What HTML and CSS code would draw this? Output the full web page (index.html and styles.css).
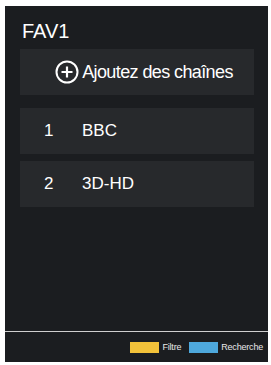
FILE: index.html
```html
<!DOCTYPE html>
<html lang="fr">
<head>
    <meta charset="UTF-8">
    <meta name="viewport" content="width=device-width, initial-scale=1.0">
    <title>FAV1</title>
    <link rel="stylesheet" href="styles.css">
</head>
<body>
    <div class="panel">
        <div class="panel-main">
            <h1 class="title">FAV1</h1>

            <!-- Add channels button -->
            <div class="add-btn">
                <svg class="add-icon" width="24" height="24" viewBox="0 0 24 24">
                    <circle cx="12" cy="12" r="10.5" fill="none" stroke="#fff" stroke-width="2"/>
                    <path d="M12 6.5v11M6.5 12h11" stroke="#fff" stroke-width="2.2"/>
                </svg>
                <span>Ajoutez des chaînes</span>
            </div>

            <!-- Channel list -->
            <div class="channel-list">
                <div class="channel-row">
                    <span class="channel-num">1</span>
                    <span class="channel-name">BBC</span>
                </div>
                <div class="channel-row">
                    <span class="channel-num">2</span>
                    <span class="channel-name">3D-HD</span>
                </div>
            </div>
        </div>

        <!-- Legend -->
        <div class="footer">
            <span class="swatch swatch-yellow"></span>
            <span class="legend-text">Filtre</span>
            <span class="swatch swatch-blue"></span>
            <span class="legend-text">Recherche</span>
        </div>
    </div>
</body>
</html>
```

FILE: styles.css
```css
body {
    margin: 0;
    background-color: #fff;
    font-family: "Liberation Sans", Arial, sans-serif;
    color: #fff;
}

.panel {
    margin: 6px 0 0 5px;
    width: 263px;
    height: 356px;
    background-color: #1b1d20;
    display: flex;
    flex-direction: column;
}

.panel-main {
    flex: 1;
    padding: 13px 14px 0 15px;
}

.title {
    margin: 0 0 6px 2px;
    font-size: 20px;
    font-weight: normal;
    line-height: 24px;
}

.add-btn {
    height: 46px;
    background-color: #27292c;
    display: flex;
    align-items: center;
    justify-content: center;
    padding-left: 14px;
    font-size: 18px;
    letter-spacing: -0.6px;
}

.add-icon {
    margin-right: 3px;
}

.channel-list {
    margin-top: 13px;
    display: flex;
    flex-direction: column;
    gap: 7px;
}

.channel-row {
    height: 46px;
    background-color: #27292c;
    display: flex;
    align-items: center;
    padding-left: 24px;
    font-size: 17px;
}

.channel-num {
    width: 38px;
}

.footer {
    height: 30px;
    border-top: 1px solid #cfcfcf;
    display: flex;
    align-items: center;
    justify-content: flex-end;
    padding-right: 5px;
}

.swatch {
    width: 29px;
    height: 11px;
    margin-right: 3px;
}

.swatch-yellow {
    background-color: #f2c23a;
}

.swatch-blue {
    background-color: #4ea8dc;
    margin-left: 8px;
}

.legend-text {
    font-size: 9px;
    letter-spacing: -0.2px;
    color: #e8e8e8;
}
```
